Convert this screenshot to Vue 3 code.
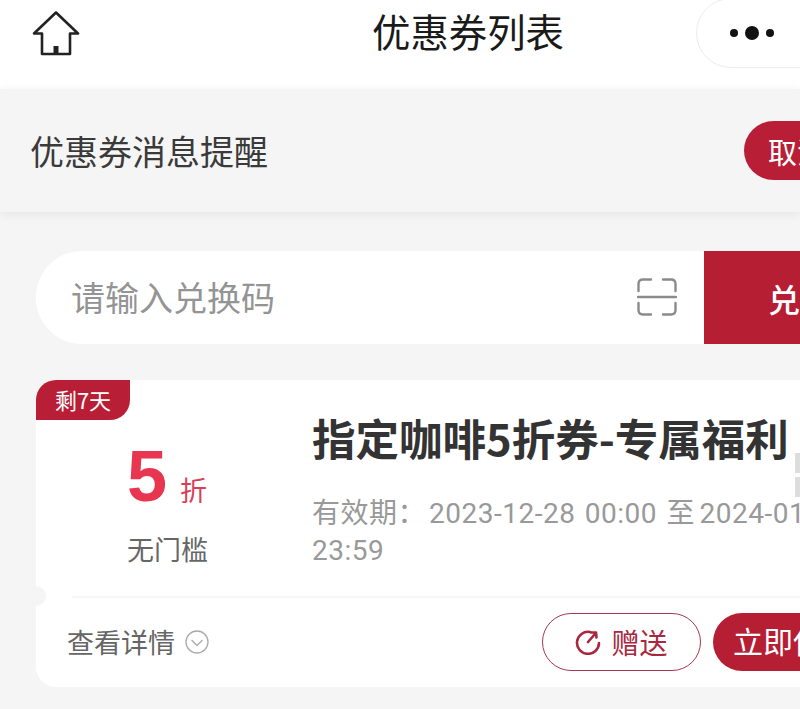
<script setup>
const title = '指定咖啡5折券-专属福利'
</script>

<template>
  <div class="page">
    <header class="nav">
      <svg class="home" width="48" height="46" viewBox="0 0 48 46" fill="none">
        <path d="M2 22.5 24 1.5 46 22.5 H38 V43 H10 V22.5 Z" stroke="#222" stroke-width="2.6" stroke-linejoin="round" />
        <path d="M24 35 V43" stroke="#222" stroke-width="5" />
      </svg>
      <h1 class="nav-title">优惠券列表</h1>
      <div class="capsule">
        <i class="dot"></i><i class="dot big"></i><i class="dot"></i>
      </div>
    </header>

    <section class="notice">
      <span class="notice-text">优惠券消息提醒</span>
      <button class="notice-btn">取消</button>
    </section>

    <div class="redeem">
      <div class="redeem-input">
        <span class="placeholder">请输入兑换码</span>
        <svg class="scan" width="40" height="38" viewBox="0 0 40 38" fill="none" stroke="#8a8a8a" stroke-width="2.4" stroke-linecap="round">
          <path d="M1.5 13 V6 Q1.5 1.5 6 1.5 H14" />
          <path d="M26 1.5 H34 Q38.5 1.5 38.5 6 V13" />
          <path d="M1.5 25 V32 Q1.5 36.5 6 36.5 H14" />
          <path d="M26 36.5 H34 Q38.5 36.5 38.5 32 V25" />
          <path d="M1 19 H39" />
        </svg>
      </div>
      <button class="redeem-btn">兑换</button>
    </div>

    <article class="coupon">
      <span class="tag">剩7天</span>
      <div class="coupon-main">
        <div class="coupon-left">
          <div class="amount"><b>5</b><span>折</span></div>
          <div class="limit">无门槛</div>
        </div>
        <div class="coupon-info">
          <h2>{{ title }}</h2>
          <p>有效期：<span class="nw start">2023-12-28</span> 00:00 <span class="to">至</span> <span class="nw">2024-01-04</span> 23:59</p>
        </div>
      </div>
      <div class="coupon-foot">
        <span class="detail">查看详情
          <svg width="24" height="24" viewBox="0 0 24 24" fill="none" stroke="#aaa" stroke-width="1.3">
            <circle cx="12" cy="12" r="11" />
            <path d="M6.5 10 12 15.5 17.5 10" />
          </svg>
        </span>
        <div class="actions">
          <button class="gift">
            <svg width="26" height="26" viewBox="0 0 26 26" fill="none" stroke="#a8283f" stroke-width="2.6" stroke-linecap="round" stroke-linejoin="round">
              <path d="M15 3 A11 11 0 1 0 24 14" />
              <path d="M13 13 20 5" />
              <path d="M16 3.500 21 3.500 21.500 8.500" />
            </svg>
            赠送
          </button>
          <button class="use">立即使用</button>
        </div>
      </div>
    </article>

    <i class="edge-mark"></i>
    <i class="edge-mark second"></i>
  </div>
</template>

<style scoped>
.page {
  position: relative;
  width: 800px;
  height: 709px;
  overflow: hidden;
  background: #f5f5f5;
  font-family: "Noto Sans CJK SC", "Noto Sans", sans-serif;
}
button {
  font-family: inherit;
  border: none;
  padding: 0;
  flex-shrink: 0;
}
.nav {
  height: 89px;
  padding-bottom: 21px;
  box-sizing: border-box;
  background: #fff;
  display: flex;
  align-items: center;
  position: relative;
}
.home {
  margin-left: 32px;
}
.nav-title {
  margin: -7px 0 0 292px;
  font-size: 38.4px;
  font-weight: 400;
  color: #1a1a1a;
  line-height: 1;
  white-space: nowrap;
}
.capsule {
  position: absolute;
  left: 696px;
  top: -2px;
  width: 180px;
  height: 70px;
  box-sizing: border-box;
  border: 1px solid #ececec;
  border-radius: 35px;
  display: flex;
  align-items: center;
  padding-left: 33px;
  gap: 7px;
}
.dot {
  width: 8px;
  height: 8px;
  border-radius: 50%;
  background: #111;
}
.dot.big {
  width: 14px;
  height: 14px;
}
.notice {
  height: 123px;
  display: flex;
  align-items: center;
  justify-content: space-between;
  padding-left: 30px;
  box-shadow: 0 2px 10px rgba(0, 0, 0, 0.07);
  position: relative;
  width: 800px;
  box-sizing: border-box;
}
.notice-text {
  font-size: 34px;
  color: #3a3a3a;
  line-height: 1;
}
.notice-btn {
  width: 120px;
  margin-right: -64px;
  height: 59px;
  border-radius: 30px;
  background: #b81f36;
  color: #fff;
  font-size: 29px;
  text-align: left;
  padding-left: 24px;
}
.redeem {
  margin: 39px 0 0 36px;
  height: 93px;
  display: flex;
  width: 860px;
}
.redeem-input {
  width: 668px;
  background: #fff;
  border-radius: 46px 0 0 46px;
  display: flex;
  align-items: center;
  justify-content: space-between;
  padding: 0 27px 2px 35px;
  box-sizing: border-box;
}
.placeholder {
  font-size: 34px;
  color: #949494;
}
.redeem-btn {
  width: 192px;
  background: #b61e33;
  color: #fff;
  font-size: 32px;
  font-weight: 500;
  text-align: left;
  padding-left: 64px;
}
.coupon {
  position: relative;
  margin: 36px 0 0 36px;
  width: 860px;
  height: 307px;
  background: #fff;
  border-radius: 20px;
}
.coupon::before {
  content: "";
  position: absolute;
  left: -10px;
  top: 206px;
  width: 20px;
  height: 20px;
  border-radius: 50%;
  background: #f5f5f5;
}
.tag {
  position: absolute;
  left: 0;
  top: 0;
  width: 94px;
  height: 40px;
  background: #b81f36;
  color: #fff;
  font-size: 22px;
  line-height: 38px;
  text-align: center;
  border-radius: 20px 0 20px 0;
}
.coupon-main {
  height: 218px;
  display: flex;
  margin-left: 36px;
  border-bottom: 2px solid #f6f6f6;
  box-sizing: border-box;
}
.coupon-left {
  width: 242px;
  flex-shrink: 0;
  padding-left: 55px;
  box-sizing: border-box;
}
.amount {
  margin-top: 60px;
  height: 72px;
  display: flex;
  align-items: baseline;
  color: #e93650;
  line-height: 72px;
}
.amount b {
  font-family: "Liberation Sans", sans-serif;
  font-size: 72px;
}
.amount span {
  font-size: 27px;
  margin-left: 13px;
  color: #d8405a;
}
.limit {
  margin-top: 19px;
  font-size: 27px;
  line-height: 36px;
  color: #666;
}
.coupon-info {
  width: 540px;
  flex-shrink: 0;
  margin-left: -2px;
}
.coupon-info h2 {
  margin: 28px 0 0;
  font-size: 43.500px;
  font-weight: 700;
  color: #333;
  line-height: 60px;
  white-space: nowrap;
}
.coupon-info p {
  margin: 27px 0 0;
  font-family: Roboto, "Noto Sans CJK SC", sans-serif;
  font-size: 28px;
  line-height: 37px;
  letter-spacing: 0.5px;
  word-spacing: 2px;
  color: #999;
}
.nw {
  white-space: nowrap;
}
.start {
  margin-left: 3px;
}
.to {
  margin-right: -5px;
}
.coupon-foot {
  height: 89px;
  padding-bottom: 2px;
  box-sizing: border-box;
  display: flex;
  align-items: center;
  padding-left: 31px;
}
.detail {
  width: 142px;
  flex-shrink: 0;
  display: flex;
  align-items: center;
  gap: 10px;
  font-size: 27px;
  color: #666;
  white-space: nowrap;
}
.actions {
  display: flex;
  gap: 12px;
  margin-left: 333px;
  flex-shrink: 0;
}
.gift,
.use {
  height: 58px;
  border-radius: 29px;
  font-size: 28px;
  display: flex;
  align-items: center;
}
.gift {
  width: 159px;
  justify-content: center;
  gap: 10px;
  background: #fff;
  color: #a8283f;
  border: 1px solid #a8384d;
  box-sizing: border-box;
}
.use {
  width: 180px;
  padding: 0 0 3px 20px;
  font-size: 30px;
  background: #b61e33;
  color: #fff;
}
.edge-mark {
  position: absolute;
  left: 795px;
  top: 453px;
  width: 5px;
  height: 20px;
  background: #ddd;
}
.edge-mark.second {
  top: 477px;
}
</style>
